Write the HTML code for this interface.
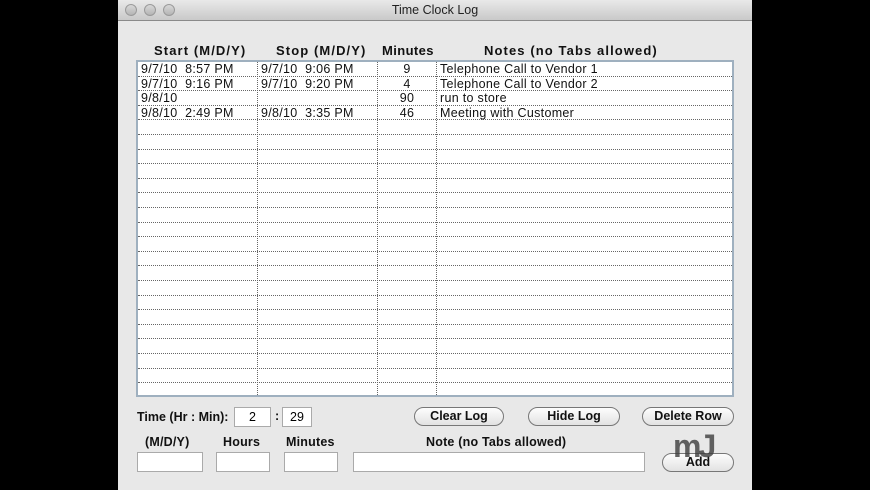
<!DOCTYPE html>
<html><head><style>
body{margin:0;width:870px;height:490px;background:#000;position:relative;overflow:hidden;font-family:"Liberation Sans",sans-serif;}
.win{position:absolute;left:118px;top:0;width:634px;height:490px;background:#e8e8e8;}
.title{position:absolute;left:0;top:0;width:634px;height:20px;background:linear-gradient(#e9e9e9,#c9c9c9);border-bottom:1px solid #8a8a8a;text-align:center;font-size:12.5px;line-height:20px;color:#222;}
.dot{position:absolute;top:4px;width:12px;height:12px;border-radius:50%;background:linear-gradient(#d8d8d8,#b4b4b4);border:1px solid #9a9a9a;box-sizing:border-box;}
.t{position:absolute;font-size:12.5px;color:#111;white-space:nowrap;letter-spacing:0.2px;}
.b{font-weight:bold;}
.h{font-size:13px;letter-spacing:1.1px;}
.table{position:absolute;left:136px;top:60px;width:598px;height:337px;background:#fff;border:2px solid #9fb0bf;box-sizing:border-box;overflow:hidden;}
.row{position:absolute;left:0;width:594px;height:14.6px;border-bottom:1px dotted #666;box-sizing:border-box;}
.col{position:absolute;top:0;height:337px;border-left:1px dotted #666;}
.c{position:absolute;font-size:12.5px;color:#111;white-space:nowrap;letter-spacing:0.3px;line-height:14px;}
.in{position:absolute;background:#fff;border:1px solid #aaa;box-sizing:border-box;font-size:12.5px;text-align:center;line-height:18px;}
.btn{position:absolute;height:19px;border:1px solid #777;border-radius:10px;background:linear-gradient(#fdfdfd,#e2e2e2);box-sizing:border-box;font-size:12.5px;font-weight:bold;text-align:center;line-height:17px;color:#111;}
</style></head><body>
<div class="win">
<div class="title"><div class="dot" style="left:7px"></div><div class="dot" style="left:26px"></div><div class="dot" style="left:45px"></div>Time Clock Log</div>
</div>
<div class="t b h" style="left:154px;top:43px">Start (M/D/Y)</div>
<div class="t b h" style="left:276px;top:43px">Stop (M/D/Y)</div>
<div class="t b h" style="left:382px;top:43px;letter-spacing:0.4px">Minutes</div>
<div class="t b h" style="left:484px;top:43px">Notes (no Tabs allowed)</div>
<div class="table" id="tb"></div>
<div class="t b" style="left:137px;top:410px;letter-spacing:0">Time (Hr : Min):</div>
<div class="in" style="left:234px;top:407px;width:37px;height:20px">2</div>
<div class="t b" style="left:275px;top:409px">:</div>
<div class="in" style="left:282px;top:407px;width:30px;height:20px">29</div>
<div class="btn" style="left:414px;top:407px;width:90px">Clear Log</div>
<div class="btn" style="left:528px;top:407px;width:92px">Hide Log</div>
<div class="btn" style="left:642px;top:407px;width:92px">Delete Row</div>
<div class="t b" style="left:145px;top:435px">(M/D/Y)</div>
<div class="t b" style="left:223px;top:435px">Hours</div>
<div class="t b" style="left:286px;top:435px">Minutes</div>
<div class="t b" style="left:426px;top:435px">Note (no Tabs allowed)</div>
<div class="in" style="left:137px;top:452px;width:66px;height:20px"></div>
<div class="in" style="left:216px;top:452px;width:54px;height:20px"></div>
<div class="in" style="left:284px;top:452px;width:54px;height:20px"></div>
<div class="in" style="left:353px;top:452px;width:292px;height:20px"></div>
<div class="btn" style="left:662px;top:453px;width:72px">Add</div>
<div class="t b" style="left:673px;top:428px;font-size:32px;color:rgba(60,60,60,.8);letter-spacing:-3px">mJ</div>
<script>
var tb=document.getElementById('tb');var h='';
for(var i=0;i<23;i++)h+='<div class="row" style="top:'+(i*14.6)+'px"></div>';
[119,239,298].forEach(function(x){h+='<div class="col" style="left:'+x+'px"></div>'});
var d=[["9/7/10&nbsp;&nbsp;8:57 PM","9/7/10&nbsp;&nbsp;9:06 PM","9","Telephone Call to Vendor 1"],["9/7/10&nbsp;&nbsp;9:16 PM","9/7/10&nbsp;&nbsp;9:20 PM","4","Telephone Call to Vendor 2"],["9/8/10","","90","run to store"],["9/8/10&nbsp;&nbsp;2:49 PM","9/8/10&nbsp;&nbsp;3:35 PM","46","Meeting with Customer"]];
d.forEach(function(r,i){var y=i*14.6;h+='<div class="c" style="left:3px;top:'+y+'px">'+r[0]+'</div><div class="c" style="left:123px;top:'+y+'px">'+r[1]+'</div><div class="c" style="left:240px;width:58px;text-align:center;top:'+y+'px">'+r[2]+'</div><div class="c" style="left:302px;top:'+y+'px">'+r[3]+'</div>'});
tb.innerHTML=h;
</script>
</body></html>
